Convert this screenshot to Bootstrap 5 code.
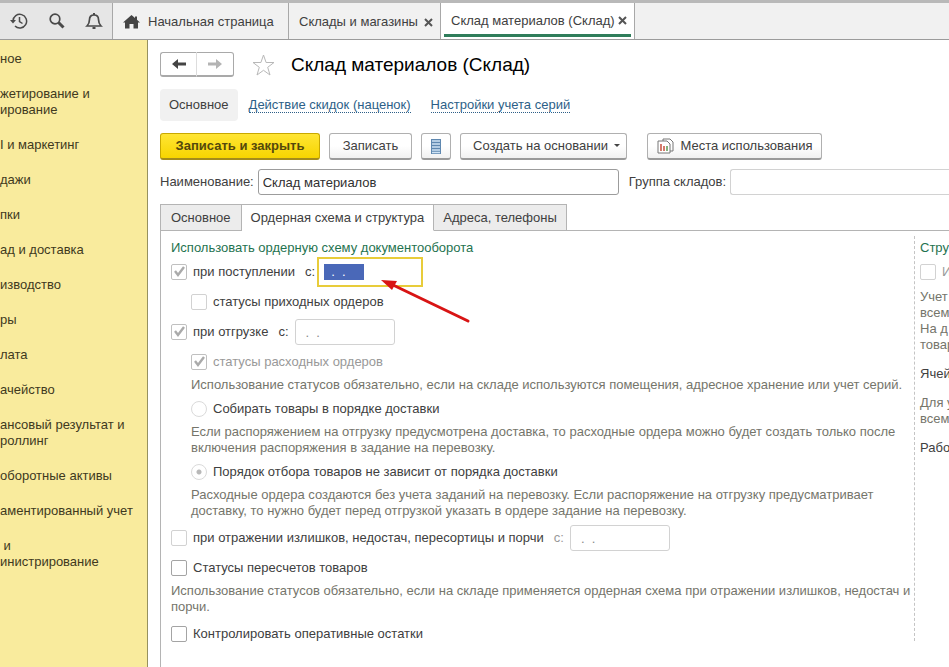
<!DOCTYPE html>
<html lang="ru">
<head>
<meta charset="utf-8">
<meta name="viewport" content="width=device-width, initial-scale=1">
<title>Склад материалов (Склад)</title>
<link href="https://cdn.jsdelivr.net/npm/bootstrap@5.3.0/dist/css/bootstrap.min.css" rel="stylesheet">
<style>
  body { font: 13px/16px "Liberation Sans", Arial, sans-serif; color: #404040; background: #fff; }
  .app { min-height: 100vh; }
  .topbar { height: 40px; border-top: 3px solid #b9b9b9; border-bottom: 1px solid #9b9b9b; background: #f1f1f1; }
  .tools { width: 113px; background: #e6e6e6; border-right: 1px solid #a8a8a8; padding-left: 10px; gap: 20px; }
  .plain { background: none; border: 0; padding: 0; color: #4a4a4a; line-height: 0; }
  .win-tab { border-right: 1px solid #a8a8a8; padding: 2px 7px 0 10px; color: #404040; }
  .win-home { width: 176px; gap: 8px; }
  .win-two { width: 152px; }
  .win-tab.current { width: 194px; background: #fff; padding: 0 3px; }
  .win-tab.current > div { border-bottom: 3px solid #2f7d5b; padding: 4px 4px 0 7px; height: 34px; }
  .side { width: 148px; background: #f9eb9d; border-right: 1px solid #96915f; padding-top: 11px; gap: 19px; }
  .side a { color: #40391e; text-decoration: none; }
  .main { padding: 12px 0 0 12px; min-width: 0; }
  .b1c { border: 1px solid #b0b0b0; border-bottom: 2px solid #9a9a9a; border-radius: 3px; background: linear-gradient(#fff 50%, #f1f1f1); color: #404040; height: 27px; padding: 0; font-size: 13px; line-height: 16px; display: flex; align-items: center; justify-content: center; gap: 6px; }
  .b1c:hover { background: #f4f4f4; }
  .w-save { width: 160px; } .w-write { width: 83px; } .w-list { width: 30px; } .w-create { width: 167px; padding-left: 6px; } .w-places { width: 175px; margin-left: 11px; }
  .arrow-btn { width: 37px; height: 25px; padding: 0; line-height: 0; border: 1px solid #a9a9a9; border-bottom-width: 2px; background: #fff; }
  .arrow-btn:first-child { border-radius: 3px 0 0 3px; border-right-color: #ddd; }
  .arrow-btn:last-child { border-radius: 0 3px 3px 0; border-left: 0; }
  .title { font-size: 19px; line-height: 24px; color: #000; margin: 0; }
  .subnav { gap: 20px; margin-top: 12px; }
  .sub-on { background: #f1f1f1; border-radius: 4px; padding: 8px 9px; margin-right: -9px; color: #404040; text-decoration: none; }
  .sub-link { color: #2d5f88; text-decoration: none; border-bottom: 1px dotted #2d5f88; line-height: 14px; }
  .toolbar { gap: 9px; margin-top: 12px; }
  .primary { background: linear-gradient(#ffe534, #f7d500); border-color: #c8a800; border-bottom-color: #a48c1c; color: #54480c; font-weight: 700; }
  .primary:hover { background: #ffdf1e; }
  .names { margin: 9px 0; }
  .names label { margin-right: 4px; }
  .names .nm { width: 361px; margin-right: 10px; }
  .fld { border: 1px solid #9c9c9c; border-radius: 3px; height: 26px; padding: 0 4px; color: #303030; font-size: 13px; background: #fff; min-width: 0; }
  .fld-off { border-color: #d2d2d2; }
  .page-tab { border: 1px solid #b4b4b4; background: #ececec; height: 27px; padding: 0 10px; color: #404040; font-size: 13px; }
  .page-tab + .page-tab { border-left: 0; padding: 0 9px; }
  .page-tab.current { background: #fff; border-bottom-color: #fff; }
  .tabs-row { margin-bottom: -1px; position: relative; z-index: 1; }
  .panel { border: solid #b4b4b4; border-width: 1px 0 0 1px; padding: 5px 0 0 10px; }
  .sect { color: #1f7350; font-size: 13px; line-height: 16px; margin: 4px 0 1px; }
  .form-col { min-width: 0; height: 405px; }
  .edge-col { width: 35px; border-left: 1px dashed #c4c4c4; padding-left: 5px; overflow: hidden; white-space: nowrap; }
  .edge-col p { margin: 13px 0; }
  .edge-col .line + p { margin-top: 2px; }
  .line { height: 30px; gap: 6px; }
  .line.low { height: 24px; margin: 4px 0 3px; }
  .sub { padding-left: 20px; }
  .hint { color: #75756b; margin: 0; white-space: nowrap; }
  .tick { appearance: none; width: 16px; height: 16px; margin: 0; border: 1px solid #a4a4a4; border-radius: 2px; background: #fff; flex: none; }
  .tick.off { border-color: #d2d2d2; }
  .tick.dim { border-color: #c0c0c0; }
  .tick:checked { background: #fff url("data:image/svg+xml,%3Csvg xmlns='http://www.w3.org/2000/svg' viewBox='0 0 14 14'%3E%3Cpath d='M3 6l3 4 6-8' fill='none' stroke='%23aaa' stroke-width='2.4'/%3E%3C/svg%3E") center/14px no-repeat; }
  .tick[type=radio] { border-radius: 50%; border: 1px solid #dadada; }
  .tick[type=radio]:checked { background: radial-gradient(circle, #b8b8b8 0 2px, #fff 3px); }
  .faded { color: #999; }
  .date { width: 100px; padding: 0 10px; color: #888; white-space: pre; }
  .date-on { width: 106px; height: 30px; border: 2px solid #e8cc3a; padding: 5px 5px; background: #fff; position: relative; margin-left: -4px; }
  .date-on input { width: 40px; height: 16px; border: 0; padding: 0 7px; background: #4a68b8; color: #fff; outline: 0; font-size: 13px; display: block; }
  .pointer { position: absolute; left: 60px; top: 17px; pointer-events: none; }
</style>
</head>
<body>
<div class="app d-flex flex-column overflow-hidden">
  <header class="topbar d-flex flex-shrink-0">
    <div class="tools d-flex align-items-center">
      <button class="plain" aria-label="История"><svg width="18" height="18" viewBox="0 0 18 18" fill="none" stroke="currentColor" stroke-width="1.5"><path d="M3 9a6.8 6.8 0 1 1 2 5M9.500 5v4.500l3 2"/><path d="M0 8h6L3 11.500z" fill="currentColor" stroke="none"/></svg></button>
      <button class="plain" aria-label="Поиск"><svg width="17" height="18" viewBox="0 0 17 18" fill="none" stroke="currentColor"><circle cx="7" cy="7" r="4.800" stroke-width="1.700"/><path d="M10.500 10.500l5 5" stroke-width="3"/></svg></button>
      <button class="plain" aria-label="Оповещения"><svg width="18" height="18" viewBox="0 0 18 18" fill="none" stroke="currentColor" stroke-width="1.700"><path d="M2 14c2-2 2.500-3 2.500-6.500C4.500 4.500 6.500 3 9 3s4.500 1.500 4.500 4.500c0 3.500.5 4.500 2.500 6.500z"/><path d="M9 1v2M7.500 16h3" stroke-width="2"/></svg></button>
    </div>
    <nav class="d-flex" aria-label="Окна">
      <a href="#" class="win-tab win-home d-flex align-items-center text-decoration-none"><svg width="17" height="14" viewBox="0 0 17 14"><path d="M8.500 0L0 7.500h2V13.500h4.500V9h4v4.500H15V7.500h2L14 4.800V1.500h-2v1.600z" fill="#444"/></svg><span>Начальная страница</span></a>
      <div class="win-tab win-two d-flex align-items-center justify-content-between"><span>Склады и магазины</span><button class="plain" aria-label="Закрыть"><svg width="9" height="9" viewBox="0 0 9 9"><path d="M1 1l7 7M8 1L1 8" stroke="#555" stroke-width="2"/></svg></button></div>
      <div class="win-tab current"><div class="d-flex align-items-center justify-content-between"><span>Склад материалов (Склад)</span><button class="plain" aria-label="Закрыть"><svg width="9" height="9" viewBox="0 0 9 9"><path d="M1 1l7 7M8 1L1 8" stroke="#555" stroke-width="2"/></svg></button></div></div>
    </nav>
  </header>
  <div class="d-flex flex-grow-1">
    <nav class="side d-flex flex-column flex-shrink-0 text-nowrap overflow-hidden" aria-label="Разделы">
      <a href="#">ное</a>
      <a href="#">жетирование и<br>ирование</a>
      <a href="#">I и маркетинг</a>
      <a href="#">дажи</a>
      <a href="#">пки</a>
      <a href="#">ад и доставка</a>
      <a href="#">изводство</a>
      <a href="#">ры</a>
      <a href="#">лата</a>
      <a href="#">ачейство</a>
      <a href="#">ансовый результат и<br>роллинг</a>
      <a href="#">оборотные активы</a>
      <a href="#">аментированный учет</a>
      <a href="#">&nbsp;и<br>инистрирование</a>
    </nav>
    <main class="main d-flex flex-column flex-grow-1">
      <div class="d-flex align-items-center">
        <div class="d-flex">
          <button class="arrow-btn" aria-label="Назад"><svg width="16" height="12" viewBox="0 0 16 12"><path d="M1 6l6-5v3.500h8v3H7V11z" fill="#444"/></svg></button>
          <button class="arrow-btn" aria-label="Вперед"><svg width="16" height="12" viewBox="0 0 16 12"><path d="M15 6L9 1v3.500H1v3h8V11z" fill="#b4b4b4"/></svg></button>
        </div>
        <button class="plain ms-3 me-3" aria-label="В избранное"><svg width="25" height="24" viewBox="0 0 25 24"><path d="M13.500 2l2.600 7.500H24l-6.300 4.800 2.300 7.700-6.500-4.700L7 22l2.300-7.700L3 9.500h7.900z" fill="#fff" stroke="#b8b8b8"/></svg></button>
        <h1 class="title">Склад материалов (Склад)</h1>
      </div>
      <nav class="subnav d-flex align-items-center" aria-label="Переходы">
        <a href="#" class="sub-on">Основное</a>
        <a href="#" class="sub-link">Действие скидок (наценок)</a>
        <a href="#" class="sub-link">Настройки учета серий</a>
      </nav>
      <div class="toolbar d-flex flex-shrink-0">
        <button class="b1c primary w-save">Записать и закрыть</button>
        <button class="b1c w-write">Записать</button>
        <button class="b1c w-list" aria-label="Список"><svg width="12" height="15" viewBox="0 0 12 15"><path d="M1 0h10v15H1z" fill="#5f88b0"/><path d="M2 2h8M2 5h8M2 8h8M2 11h8M2 13.500h8" stroke="#cfe2f3" stroke-width="1.300"/></svg></button>
        <button class="b1c w-create">Создать на основании <svg width="6" height="4" viewBox="0 0 6 4"><path d="M0 0h6L3 3z" fill="#444"/></svg></button>
        <button class="b1c w-places"><svg width="18" height="16" viewBox="0 0 18 16" fill="#fff" stroke="#777"><path d="M6 1h7l3 3v9H6z"/><path d="M1 3h9l3 3v9H1z"/><path d="M4 6v7M7 8v5" stroke="#c6503c" stroke-width="1.500"/><path d="M10 8v5" stroke="#5d9a52" stroke-width="1.500"/></svg> Места использования</button>
      </div>
      <div class="names d-flex align-items-center text-nowrap">
        <label for="nm">Наименование:</label>
        <input id="nm" class="fld nm" value="Склад материалов">
        <label for="gr">Группа складов:</label>
        <input id="gr" class="fld fld-off flex-grow-1 border-end-0 rounded-end-0">
      </div>
      <div class="tabs-row d-flex" role="tablist">
        <button class="page-tab" role="tab">Основное</button>
        <button class="page-tab current" role="tab" aria-selected="true">Ордерная схема и структура</button>
        <button class="page-tab" role="tab">Адреса, телефоны</button>
      </div>
      <div class="panel d-flex flex-grow-1">
        <div class="form-col flex-grow-1">
          <h2 class="sect">Использовать ордерную схему документооборота</h2>
          <div class="line d-flex align-items-center">
            <input class="tick dim" type="checkbox" id="c1" checked><label for="c1">при поступлении</label>
            <label for="d1" class="ms-1">с:</label>
            <div class="date-on"><input id="d1" value=".  ."><svg class="pointer" width="92" height="48" viewBox="0 0 92 48"><path d="M14 9L89 45" stroke="#d81414" stroke-width="3" stroke-linecap="round"/><path d="M2 4l16 1-5 9z" fill="#d81414"/></svg></div>
          </div>
          <div class="line sub d-flex align-items-center"><input class="tick off" type="checkbox" id="c2"><label for="c2">статусы приходных ордеров</label></div>
          <div class="line d-flex align-items-center">
            <input class="tick dim" type="checkbox" id="c3" checked><label for="c3">при отгрузке</label>
            <label for="d2" class="ms-1">с:</label><input id="d2" class="fld fld-off date" value=".  .">
          </div>
          <div class="line sub d-flex align-items-center faded"><input class="tick dim" type="checkbox" id="c4" checked><label for="c4">статусы расходных ордеров</label></div>
          <p class="hint sub">Использование статусов обязательно, если на складе используются помещения, адресное хранение или учет серий.</p>
          <div class="line low sub d-flex align-items-center"><input class="tick" type="radio" name="ord" id="r1"><label for="r1">Собирать товары в порядке доставки</label></div>
          <p class="hint sub">Если распоряжением на отгрузку предусмотрена доставка, то расходные ордера можно будет создать только после<br>включения распоряжения в задание на перевозку.</p>
          <div class="line low sub d-flex align-items-center"><input class="tick" type="radio" name="ord" id="r2" checked><label for="r2">Порядок отбора товаров не зависит от порядка доставки</label></div>
          <p class="hint sub">Расходные ордера создаются без учета заданий на перевозку. Если распоряжение на отгрузку предусматривает<br>доставку, то нужно будет перед отгрузкой указать в ордере задание на перевозку.</p>
          <div class="line mt-1 d-flex align-items-center">
            <input class="tick off" type="checkbox" id="c5"><label for="c5">при отражении излишков, недостач, пересортицы и порчи</label>
            <label for="d3" class="ms-1 faded">с:</label><input id="d3" class="fld fld-off date" value=".  .">
          </div>
          <div class="line d-flex align-items-center"><input class="tick" type="checkbox" id="c6"><label for="c6">Статусы пересчетов товаров</label></div>
          <p class="hint pb-1">Использование статусов обязательно, если на складе применяется ордерная схема при отражении излишков, недостач и<br>порчи.</p>
          <div class="line d-flex align-items-center"><input class="tick" type="checkbox" id="c7"><label for="c7">Контролировать оперативные остатки</label></div>
        </div>
        <div class="edge-col flex-shrink-0 align-self-start form-col">
          <h2 class="sect">Стру</h2>
          <div class="line d-flex align-items-center faded"><input class="tick off" type="checkbox" id="e1"><label for="e1">И</label></div>
          <p class="hint">Учет<br>всем<br>На д<br>товар</p>
          <p>Ячей</p>
          <p class="hint">Для у<br>всем</p>
          <p>Рабо</p>
        </div>
      </div>
    </main>
  </div>
</div>
<script src="https://cdn.jsdelivr.net/npm/bootstrap@5.3.0/dist/js/bootstrap.bundle.min.js"></script>
</body>
</html>
